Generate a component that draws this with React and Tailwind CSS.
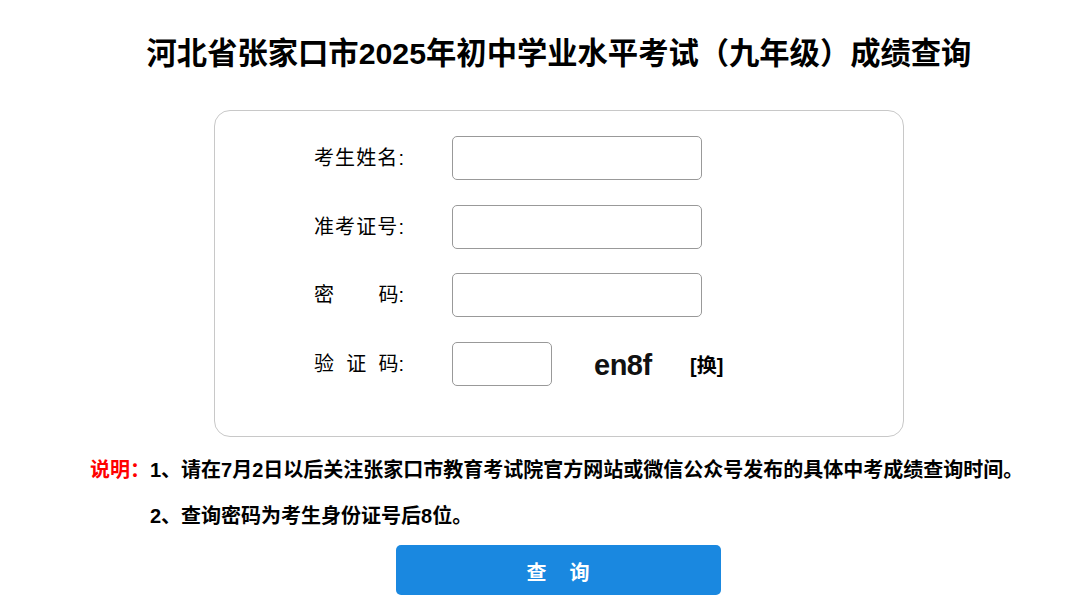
import { useState } from 'react';

const font = { fontFamily: '"Liberation Sans", "Noto Sans CJK SC", sans-serif' };

const Label = ({ chars }) => (
  <div className="w-[138px] shrink-0">
    <div className="flex w-[90px] justify-between text-[20px] leading-[28px] text-black">
      {chars.map((c, i) => (
        <span key={i}>{c}</span>
      ))}
    </div>
  </div>
);

export default function App() {
  const [form, setForm] = useState({ name: '', ticket: '', password: '', code: '' });
  const [captcha, setCaptcha] = useState('en8f');

  const set = (field) => (e) => setForm((prev) => ({ ...prev, [field]: e.target.value }));

  const refresh = () => {
    const pool = 'abcdefghjkmnpqrstuvwxyz23456789';
    let s = '';
    for (let i = 0; i < 4; i++) s += pool[Math.floor(Math.random() * pool.length)];
    setCaptcha(s);
  };

  return (
    <div className="min-h-screen bg-white" style={font}>
      <div className="flex flex-col items-center pl-[37px]">
        <h1 className="pt-[31px] text-[30.3px] font-bold leading-[45px] text-black">
          河北省张家口市2025年初中学业水平考试（九年级）成绩查询
        </h1>

        <div className="mt-[34px] h-[327px] w-[690px] rounded-[16px] border border-[#c8c8c8] pl-[99px] pt-[25px]">
          <div className="flex flex-col gap-[24.5px]">
            <div className="flex items-center">
              <Label chars={['考', '生', '姓', '名', ':']} />
              <input
                value={form.name}
                onChange={set('name')}
                className="h-[44px] w-[250px] rounded-[5px] border border-[#999] px-2 text-[16px] outline-none"
              />
            </div>
            <div className="flex items-center">
              <Label chars={['准', '考', '证', '号', ':']} />
              <input
                value={form.ticket}
                onChange={set('ticket')}
                className="h-[44px] w-[250px] rounded-[5px] border border-[#999] px-2 text-[16px] outline-none"
              />
            </div>
            <div className="flex items-center">
              <Label chars={['密', '码:']} />
              <input
                type="password"
                value={form.password}
                onChange={set('password')}
                className="h-[44px] w-[250px] rounded-[5px] border border-[#999] px-2 text-[16px] outline-none"
              />
            </div>
            <div className="flex items-center">
              <Label chars={['验', '证', '码:']} />
              <input
                value={form.code}
                onChange={set('code')}
                className="h-[44px] w-[100px] rounded-[5px] border border-[#999] px-2 text-[16px] outline-none"
              />
              <span className="ml-[42px] mt-[4px] w-[58px] text-[29px] font-bold leading-none tracking-[-0.5px] text-[#111]">
                {captcha}
              </span>
              <button
                type="button"
                onClick={refresh}
                className="ml-[38px] mt-[4px] cursor-pointer text-[20px] font-bold text-black"
              >
                [换]
              </button>
            </div>
          </div>
        </div>
      </div>

      <div className="mt-[10px] pl-[90px] text-[20px] font-bold leading-[46px] text-black">
        <div className="flex">
          <span className="text-[#ff0000]">说明：</span>
          <span>1、请在7月2日以后关注张家口市教育考试院官方网站或微信公众号发布的具体中考成绩查询时间。</span>
        </div>
        <div className="pl-[60px]">2、查询密码为考生身份证号后8位。</div>
      </div>

      <div className="flex justify-center pl-[35px]">
        <button
          type="button"
          className="mt-[6px] flex h-[50px] w-[325px] items-center justify-center gap-[23px] rounded-[5px] bg-[#1a88e0] pt-[5px] text-[20px] font-bold text-white"
        >
          <span>查</span>
          <span>询</span>
        </button>
      </div>
    </div>
  );
}
